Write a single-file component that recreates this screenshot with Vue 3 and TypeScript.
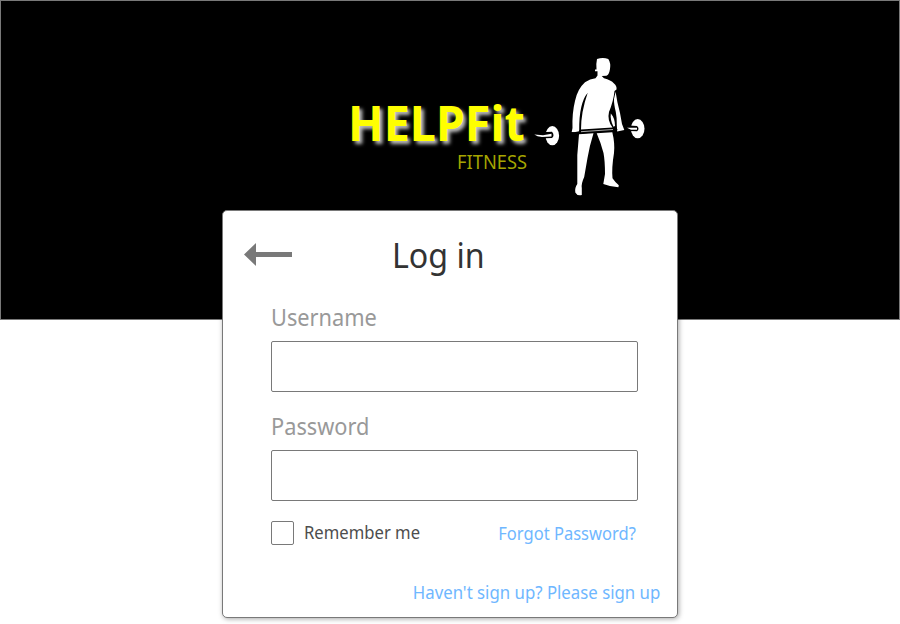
<script setup lang="ts">
import { ref } from 'vue'

const username = ref<string>('')
const password = ref<string>('')
const remember = ref<boolean>(false)
</script>

<template>
  <main class="page">
    <header class="hero">
      <div class="brand">
        <h1 class="name">HELPFit</h1>
        <p class="tagline">FITNESS</p>
      </div>
      <svg class="athlete" viewBox="532 55 116 144" fill="#fff" aria-hidden="true">
        <path d="M597 59Q603 57 608.3 59Q611 63 610 69Q609 75 606.5 75.7L601.7 76L604 78.3Q611 80 614 83.5Q617 86 616.5 89.5L614.5 91Q613.5 101 609 112Q607 120 612.5 127.5L581 129.5Q581 112 587.7 92.7Q579 103 579.2 130L578.5 132.5L571.7 132L572.5 128Q572 113 575 101Q577.5 89 585 82.3Q590 79 595.5 78.3L597.5 75.5V71.2H595V69.5H596.5Q596 63 597 59Z" />
        <path d="M615.6 91.7Q617 102 620 113L622 124L624.3 130L617.2 131.4L616.8 125Q617 118 615.8 112Q613.8 104 614 99Z" />
        <path d="M610.8 113.5Q615 118 615 126L613.5 126.7Q610 120 610.8 113.5Z" />
        <path d="M579 134.2L593.5 133.3Q589.5 146 587.5 158L584.2 177Q581 184 581.8 188V195Q577 196 575.3 192.5Q574.5 188 577.3 184V155Z" />
        <path d="M596.7 133.3L612.3 132.3Q615 143 614 153Q611.5 168 612.5 178.3Q615 182 618.8 185.3L618.4 187.3Q611 187 603.3 184L605 174Q605 161 603.5 153Q600.5 142 596.7 133.3Z" />
        <path d="M571.5 132.8L578 131.5L613 128.2L618 129.8L615.5 130.8L579 133.7Z" fill="#000" />
        <path d="M581 131.7L613 129.5" stroke="#aaa" stroke-width="1" />
        <ellipse cx="552.3" cy="135.7" rx="6.8" ry="9.6" />
        <path d="M541 132.2L552 131.7Q555 135.5 552 138L545 138.3Z" fill="#000" />
        <path d="M534.3 134.6L543 135.2L551.5 133.8V136.6L542 137Q537 136.8 534.3 134.6Z" />
        <ellipse cx="637.7" cy="128.7" rx="6.8" ry="9.6" />
        <path d="M629 125.5L637 126Q640 128.7 637 131.2L630 131Z" fill="#000" />
        <path d="M627 127.7L637 127.8V129.7L631 129.8Z" />
      </svg>
    </header>

    <form class="card" @submit.prevent>
      <div class="card-head">
        <button class="back" type="button" aria-label="Back">
          <svg viewBox="0 0 48 24" fill="#797979"><path d="M0 11.5L12 0V9H48V14H12V23Z" /></svg>
        </button>
        <h2 class="title">Log in</h2>
      </div>
      <div class="fields">
        <label class="label" for="username">Username</label>
        <input id="username" v-model="username" class="field" type="text" />
        <label class="label" for="password">Password</label>
        <input id="password" v-model="password" class="field" type="password" />
        <div class="options">
          <label class="remember">
            <input v-model="remember" class="check" type="checkbox" />
            <span>Remember me</span>
          </label>
          <a class="link forgot" href="#">Forgot Password?</a>
        </div>
      </div>
      <a class="link signup" href="#">Haven't sign up? Please sign up</a>
    </form>
  </main>
</template>

<style>
body {
  margin: 0;
  background: #fff;
}
</style>

<style scoped>
* {
  box-sizing: border-box;
}

.page {
  height: 624px;
  overflow: hidden;
  font-family: 'Trebuchet MS', 'Noto Sans', sans-serif;
}

.hero {
  display: flex;
  height: 320px;
  padding: 54px 0 0 347px;
  border: 1px solid #797979;
  background: #000;
}

.brand {
  width: 184px;
  padding-top: 41px;
}

.name {
  width: max-content;
  margin: 0;
  color: #ff0;
  font-size: 48px;
  font-weight: 700;
  line-height: 54px;
  text-shadow: 3px 3px 4px rgba(255, 255, 255, 0.75);
  transform: scaleX(0.972);
  transform-origin: left;
}

.tagline {
  width: max-content;
  margin: 0 0 0 109px;
  color: #a5a500;
  font-size: 20px;
  line-height: 24px;
  transform: scaleX(0.915);
  transform-origin: left;
}

.athlete {
  width: 116px;
  height: 144px;
}

.card {
  position: relative;
  display: flex;
  flex-direction: column;
  width: 456px;
  height: 408px;
  margin: -110px 0 0 222px;
  border: 1px solid #797979;
  border-radius: 5px;
  background: #fff;
  box-shadow: 1px 1px 5px rgba(0, 0, 0, 0.35);
}

.card-head {
  display: flex;
  height: 91px;
  padding: 22px 0 0 21px;
}

.back {
  width: 48px;
  height: 24px;
  margin-top: 10px;
  padding: 0;
  border: 0;
  background: none;
}

.back svg {
  display: block;
  width: 48px;
  height: 24px;
}

.title {
  margin: 0 0 0 100px;
  color: #333;
  font-size: 35px;
  font-weight: 400;
  line-height: 43px;
  white-space: nowrap;
  transform: scaleX(0.92);
  transform-origin: left;
}

.fields {
  display: flex;
  flex-direction: column;
  width: 367px;
  margin-left: 48px;
}

.label {
  width: max-content;
  height: 39px;
  color: #999;
  font-size: 24px;
  line-height: 30px;
  transform: scaleX(0.907);
  transform-origin: left;
}

.field {
  width: 367px;
  height: 51px;
  margin: 0 0 19px;
  padding: 0 12px;
  border: 1px solid #797979;
  border-radius: 2px;
  background: #fff;
  font: inherit;
  font-size: 20px;
}

.options {
  display: flex;
  justify-content: space-between;
  height: 24px;
  margin-top: 1px;
}

.remember {
  display: flex;
  gap: 10px;
  color: #4d4d4d;
  font-size: 18px;
  line-height: 22px;
}

.remember span {
  width: max-content;
  transform: scaleX(0.925);
  transform-origin: left;
}

.check {
  width: 23px;
  height: 24px;
  margin: 0;
  border: 1px solid #797979;
  border-radius: 2px;
  appearance: none;
  background: #fff;
}

.link {
  color: #6fb7ff;
  font-size: 18px;
  line-height: 24px;
  text-decoration: none;
  white-space: nowrap;
  transform: scaleX(0.918);
  transform-origin: right;
}

.forgot {
  margin-right: 2px;
}

.signup {
  align-self: flex-end;
  margin: 35px 17px 0 0;
  transform: scaleX(0.933);
}
</style>
